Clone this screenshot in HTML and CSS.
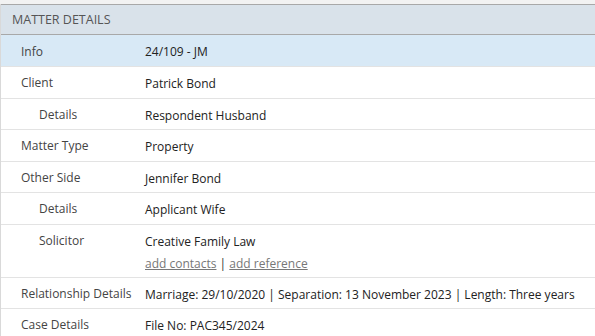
FILE: index.html
```html
<!DOCTYPE html>
<html>
<head>
<meta charset="utf-8">
<link rel="stylesheet" href="styles.css">
</head>
<body>
<div class="topstrip"></div>
<div class="panel">
  <div class="panel-header">MATTER DETAILS</div>
  <div class="row active">
    <div class="label">Info</div>
    <div class="value">24/109 - JM</div>
  </div>
  <div class="row">
    <div class="label">Client</div>
    <div class="value">Patrick Bond</div>
  </div>
  <div class="row">
    <div class="label sub">Details</div>
    <div class="value">Respondent Husband</div>
  </div>
  <div class="row">
    <div class="label">Matter Type</div>
    <div class="value">Property</div>
  </div>
  <div class="row">
    <div class="label">Other Side</div>
    <div class="value">Jennifer Bond</div>
  </div>
  <div class="row">
    <div class="label sub">Details</div>
    <div class="value">Applicant Wife</div>
  </div>
  <div class="row tall">
    <div class="label sub">Solicitor</div>
    <div class="value">
      <div>Creative Family Law</div>
      <div class="links"><a href="#">add contacts</a> | <a href="#">add reference</a></div>
    </div>
  </div>
  <div class="row">
    <div class="label">Relationship Details</div>
    <div class="value">Marriage: 29/10/2020 | Separation: 13 November 2023 | Length: Three years</div>
  </div>
  <div class="row last">
    <div class="label">Case Details</div>
    <div class="value">File No: PAC345/2024</div>
  </div>
</div>
</body>
</html>
```
FILE: styles.css
```css
html, body {
  margin: 0;
  padding: 0;
  background: #ffffff;
}
body {
  font-family: "Open Sans", "Noto Sans", sans-serif;
  font-size: 12px;
  line-height: 16px;
  color: #222;
}
.topstrip {
  height: 4px;
  background: #f2f2f2;
}
.panel {
  border-left: 1px solid #d9d9d9;
}
.panel-header {
  height: 29px;
  line-height: 29px;
  background: #d9e2ea;
  border-top: 1px solid #a8a8a8;
  border-bottom: 1px solid #a8a8a8;
  padding-left: 11px;
  color: #555;
  font-size: 12.5px;
}
.row {
  display: flex;
  border-bottom: 1px solid #e3e3e3;
  height: 30.5px;
  box-sizing: content-box;
}
.row.active {
  background: #d8e9f6;
  height: 31px;
}
.row.active .label,
.row.active .value {
  padding-top: 9px;
}
.row.tall {
  height: 52px;
}
.row.last {
  border-bottom: none;
}
.label {
  width: 124px;
  padding-left: 20px;
  padding-top: 8px;
  color: #444;
  flex: none;
}
.label.sub {
  padding-left: 38px;
  width: 106px;
}
.value {
  padding-top: 9px;
  color: #222;
}
.links {
  margin-top: 6px;
  color: #333;
}
.links a {
  color: #777;
  text-decoration: underline;
}
```
